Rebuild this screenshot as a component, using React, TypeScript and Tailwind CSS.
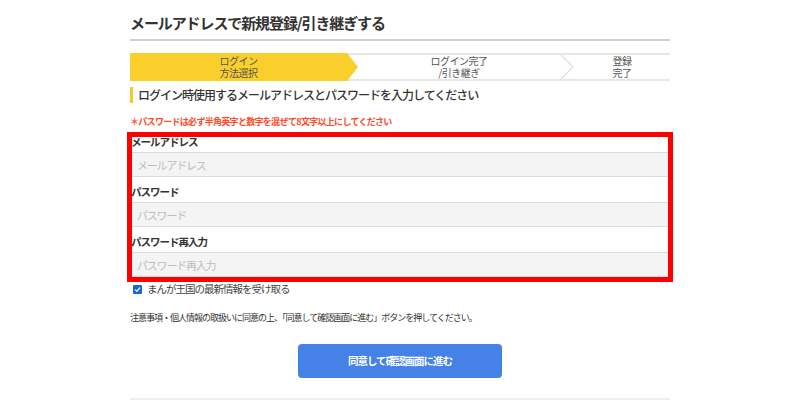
import React from 'react'

const font = { fontFamily: '"Noto Sans CJK JP", "Noto Sans", sans-serif' }

function Field({ label, placeholder }: { label: string; placeholder: string }) {
  return (
    <div>
      <div className="h-[25px] flex items-end pb-[3px] pl-[1px] text-[10.5px] font-bold tracking-[-1px] text-[#333] leading-[14px]">
        {label}
      </div>
      <input
        type="text"
        placeholder={placeholder}
        className="block w-full h-[25px] px-[7px] bg-[#f4f4f4] border-y border-[#dcdcdc] text-[11px] tracking-[-1.2px] placeholder:text-[#bdbdbd] outline-none"
      />
    </div>
  )
}

export default function App() {
  return (
    <div className="w-[800px] h-[400px] bg-white overflow-hidden" style={font}>
      <div className="w-[540px] mx-auto">
        {/* title */}
        <h1 className="h-[41px] pt-[13px] border-b-2 border-[#cfcfcf] text-[15px] font-bold tracking-[-1.1px] leading-[20px] text-[#333]">
          メールアドレスで新規登録/引き継ぎする
        </h1>

        {/* steps */}
        <div className="mt-[12px] h-[28px] border-y-2 border-[#e6e6e6] flex text-[10px] tracking-[-0.5px] leading-[12px] text-[#555]">
          <div className="-my-[2px] h-[28px] w-[228px] shrink-0 bg-[#fbcf2b] flex flex-col items-center justify-center pr-[11px] [clip-path:polygon(0_0,217px_0,228px_50%,217px_100%,0_100%)]">
            <span>ログイン</span>
            <span>方法選択</span>
          </div>
          <div className="flex-1 flex flex-col items-center justify-center">
            <span>ログイン完了</span>
            <span>/引き継ぎ</span>
          </div>
          <svg width="14" height="24" viewBox="0 0 14 24" className="shrink-0">
            <path d="M1 0 L13 12 L1 24" fill="none" stroke="#e2e2e2" strokeWidth="1.5" />
          </svg>
          <div className="w-[96px] shrink-0 flex flex-col items-center justify-center">
            <span>登録</span>
            <span>完了</span>
          </div>
        </div>

        {/* heading */}
        <div className="mt-[6px] h-[16px] border-l-[3px] border-[#f7c72b] pl-[5px] flex items-center text-[12px] tracking-[-1px] font-medium text-[#333]">
          ログイン時使用するメールアドレスとパスワードを入力してください
        </div>

        <p className="mt-[13px] text-[9px] leading-[12px] font-bold tracking-[-0.7px] text-[#ff4a2a]">
          ＊パスワードは必ず半角英字と数字を混ぜて8文字以上にしてください
        </p>

        {/* form */}
        <div className="relative mt-[-1px]">
          <Field label="メールアドレス" placeholder="メールアドレス" />
          <Field label="パスワード" placeholder="パスワード" />
          <Field label="パスワード再入力" placeholder="パスワード再入力" />
          <div className="absolute -left-[3px] -right-[3px] top-[5px] -bottom-[5px] border-[5px] border-[#ff0000] pointer-events-none" />
        </div>

        <label className="mt-[5px] h-[14px] flex items-center gap-[5px] pl-[3px] text-[10.5px] tracking-[-1px] text-[#444]">
          <span className="w-[9px] h-[9px] rounded-[1px] bg-[#1a66d2] flex items-center justify-center">
            <svg width="7" height="7" viewBox="0 0 10 10">
              <path d="M1.5 5.2 L4 7.6 L8.6 2.4" fill="none" stroke="#fff" strokeWidth="1.8" />
            </svg>
          </span>
          まんが王国の最新情報を受け取る
        </label>

        <p className="mt-[16px] text-[9px] leading-[12px] tracking-[-1px] text-[#333]">
          注意事項・個人情報の取扱いに同意の上、「同意して確認画面に進む」ボタンを押してください。
        </p>

        <button className="block mx-auto mt-[20px] w-[204px] h-[34px] rounded-[4px] bg-[#4581e7] text-white text-[10.5px] font-bold tracking-[-1px]">
          同意して確認画面に進む
        </button>

        <div className="mt-[20px] h-[3px] bg-[#eeeeee]" />
      </div>
    </div>
  )
}
